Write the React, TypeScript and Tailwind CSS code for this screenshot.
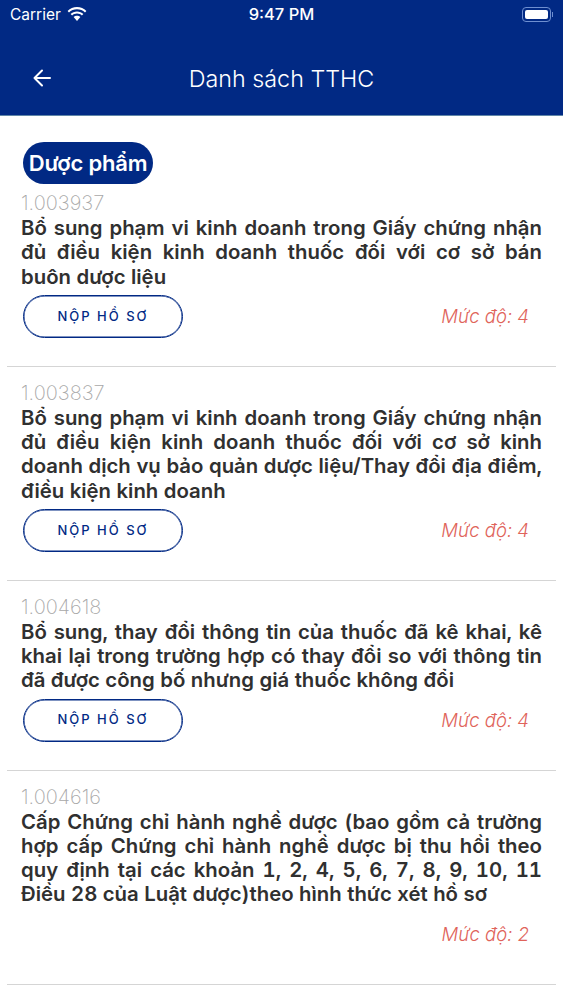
import React from "react";

const items = [
  { id: "1.003937", title: "Bổ sung phạm vi kinh doanh trong Giấy chứng nhận đủ điều kiện kinh doanh thuốc đối với cơ sở bán buôn dược liệu", level: 4, btn: true },
  { id: "1.003837", title: "Bổ sung phạm vi kinh doanh trong Giấy chứng nhận đủ điều kiện kinh doanh thuốc đối với cơ sở kinh doanh dịch vụ bảo quản dược liệu/Thay đổi địa điểm, điều kiện kinh doanh", level: 4, btn: true },
  { id: "1.004618", title: "Bổ sung, thay đổi thông tin của thuốc đã kê khai, kê khai lại trong trường hợp có thay đổi so với thông tin đã được công bố nhưng giá thuốc không đổi", level: 4, btn: true },
  { id: "1.004616", title: "Cấp Chứng chỉ hành nghề dược (bao gồm cả trường hợp cấp Chứng chỉ hành nghề dược bị thu hồi theo quy định tại các khoản 1, 2, 4, 5, 6, 7, 8, 9, 10, 11 Điều 28 của Luật dược)theo hình thức xét hồ sơ", level: 2, btn: false },
];

export default function App() {
  return (
    <div className="w-[563px] h-[1000px] overflow-hidden bg-white font-['Inter','Noto_Sans',sans-serif]">
      <header className="h-[116px] bg-[#012984] text-white border-b border-[#5f86a8]">
        <div className="h-[29px] px-[10px] flex items-center justify-between relative">
          <div className="flex items-center gap-[6px] text-[15.500px] leading-none">
            <span>Carrier</span>
            <svg width="20" height="15" viewBox="0 0 20 15" fill="white">
              <path d="M10 2.200c3.100 0 5.900 1.200 8 3.200l1.400-1.500C16.900 1.500 13.600 0 10 0S3.100 1.500.6 3.900L2 5.400c2.100-2 4.900-3.200 8-3.200z" />
              <path d="M10 6.600c1.900 0 3.600.7 4.900 1.900l1.500-1.500C14.700 5.400 12.500 4.400 10 4.400S5.300 5.400 3.600 7l1.500 1.500C6.400 7.300 8.100 6.600 10 6.600z" />
              <path d="M10 8.800c-1.300 0-2.500.5-3.400 1.300L10 14l3.400-3.900c-.9-.8-2.100-1.300-3.400-1.300z" />
            </svg>
          </div>
          <span className="absolute left-0 right-0 text-center text-[16.500px] font-medium leading-none">9:47 PM</span>
          <div className="flex items-center gap-[1px]">
            <div className="w-[29px] h-[15px] rounded-[4px] border border-[#6f8fd0] p-[2px]">
              <div className="w-full h-full rounded-[2px] bg-white" />
            </div>
            <div className="w-[1px] h-[5px] bg-[#6f8fd0]" />
          </div>
        </div>
        <div className="h-[86px] pt-[13px] relative flex items-center justify-center">
          <svg className="absolute left-[32px] top-[39px]" width="20" height="20" viewBox="0 0 20 20" fill="none" stroke="white" strokeWidth="2" strokeLinecap="round" strokeLinejoin="round">
            <path d="M18 10H2.500M10 2.500 2.500 10l7.500 7.500" />
          </svg>
          <h1 className="text-[23.300px] font-light leading-none">Danh sách TTHC</h1>
        </div>
      </header>
      <main className="px-[7px]">
        <div className="px-[16px] pt-[26px] h-[75px]">
          <span className="inline-flex items-center justify-center h-[42px] w-[130px] rounded-full bg-[#012984] text-white text-[22px] font-semibold leading-none tracking-[-0.2px] whitespace-nowrap">Dược phẩm</span>
        </div>
        {items.map((it, i) => (
          <section key={it.id} className={i === 0 ? "border-b border-[#d5d5d5] px-[14px] pb-[28px]" : "border-b border-[#d5d5d5] px-[14px] pb-[28px] pt-[14px]"}>
            <div className="text-[#a8a8a8] text-[20px] font-extralight leading-[25px]">{it.id}</div>
            <p className="text-[#303030] text-[20.350px] font-semibold leading-[24.250px] text-justify tabular-nums">{it.title}</p>
            <div className="mt-[6px] h-[43px] flex items-center justify-between">
              {it.btn ? (
                <button className="ml-[2px] w-[160px] h-[43px] rounded-full border border-[#012984] shadow-[inset_0_0_0_0.5px_#012984] bg-white text-[#012984] text-[13px] font-medium tracking-[2px]">NỘP HỒ SƠ</button>
              ) : <span />}
              <span className="mr-[13px] mt-[2px] italic font-light text-[#e0635a] text-[18.500px]">Mức độ: {it.level}</span>
            </div>
          </section>
        ))}
      </main>
    </div>
  );
}
